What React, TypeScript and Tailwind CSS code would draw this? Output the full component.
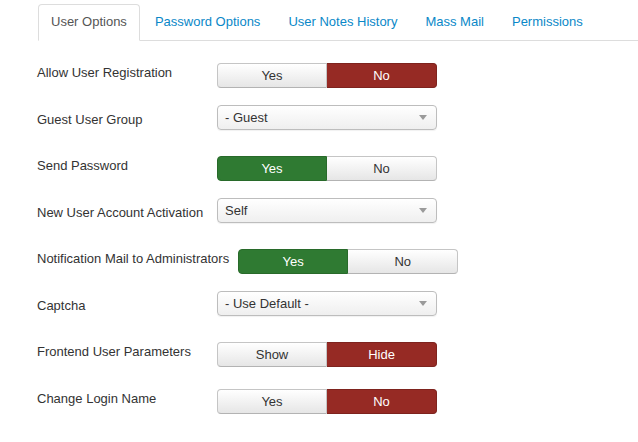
import React from "react";

type Row =
  | { kind: "toggle"; label: string; a: string; b: string; active: "a" | "b"; color: "red" | "green"; h: string }
  | { kind: "select"; label: string; value: string; h: string };

const rows: Row[] = [
  { kind: "toggle", label: "Allow User Registration", a: "Yes", b: "No", active: "b", color: "red", h: "h-[47px]" },
  { kind: "select", label: "Guest User Group", value: "- Guest", h: "h-[46px]" },
  { kind: "toggle", label: "Send Password", a: "Yes", b: "No", active: "a", color: "green", h: "h-[47px]" },
  { kind: "select", label: "New User Account Activation", value: "Self", h: "h-[46px]" },
  { kind: "toggle", label: "Notification Mail to Administrators", a: "Yes", b: "No", active: "a", color: "green", h: "h-[47px]" },
  { kind: "select", label: "Captcha", value: "- Use Default -", h: "h-[46px]" },
  { kind: "toggle", label: "Frontend User Parameters", a: "Show", b: "Hide", active: "b", color: "red", h: "h-[47px]" },
  { kind: "toggle", label: "Change Login Name", a: "Yes", b: "No", active: "b", color: "red", h: "h-[46px]" },
];

const inactiveCls =
  "bg-gradient-to-b from-white to-[#e6e6e6] text-[#333] border border-[#c5c5c5] border-b-[#b3b3b3]";

function Toggle({ a, b, active, color }: { a: string; b: string; active: "a" | "b"; color: "red" | "green" }) {
  const activeCls =
    color === "red"
      ? "bg-[#962a24] text-white border border-[#7e231e]"
      : "bg-[#2f7a32] text-white border border-[#286a2a]";
  return (
    <div className="flex w-[220px] h-[25px] mt-[1px] text-[13px] leading-[18px]">
      <div
        className={`w-[110px] flex items-center justify-center rounded-l-[4px] ${
          active === "a" ? activeCls : inactiveCls
        }`}
      >
        {a}
      </div>
      <div
        className={`w-[110px] flex items-center justify-center rounded-r-[4px] border-l-0 ${
          active === "b" ? activeCls : inactiveCls
        }`}
      >
        {b}
      </div>
    </div>
  );
}

function Select({ value }: { value: string }) {
  return (
    <div className="-mt-[4px] w-[220px] h-[25px] flex items-center justify-between rounded-[4px] border border-[#bdbdbd] bg-gradient-to-b from-white to-[#efefef] pl-[7px] pr-[9px] text-[13px] text-[#333] shadow-[0_1px_1px_rgba(0,0,0,0.06)]">
      <span>{value}</span>
      <svg width="8" height="5" viewBox="0 0 8 5">
        <path d="M0 0 L8 0 L4 5 Z" fill="#9a9a9a" />
      </svg>
    </div>
  );
}

export default function App() {
  const tabs = ["User Options", "Password Options", "User Notes History", "Mass Mail", "Permissions"];
  return (
    <div
      className="w-[638px] h-[442px] bg-white overflow-hidden text-[#333]"
      style={{ fontFamily: '"Liberation Sans", Arial, sans-serif' }}
    >
      <div className="pt-[4px] pl-[38px]">
        <div className="flex border-b border-[#ddd] text-[13px] leading-[18px]">
          {tabs.map((t, i) =>
            i === 0 ? (
              <div
                key={t}
                className="-mb-px mr-[2px] px-[12px] py-[8px] border border-[#ddd] border-b-white rounded-t-[4px] bg-white text-[#555]"
              >
                {t}
              </div>
            ) : (
              <div key={t} className="mr-[2px] px-[12px] py-[8px] border border-transparent text-[#0a88c8]">
                {t}
              </div>
            )
          )}
        </div>
      </div>
      <div className="pl-[37px] pt-[21px]">
        {rows.map((r) => (
          <div key={r.label} className={`flex items-start ${r.h}`}>
            <div className="shrink-0 min-w-[180px] pr-[9px] whitespace-nowrap text-[13px] leading-[18px] mt-[2px] text-[#333]">
              {r.label}
            </div>
            {r.kind === "toggle" ? (
              <Toggle a={r.a} b={r.b} active={r.active} color={r.color} />
            ) : (
              <Select value={r.value} />
            )}
          </div>
        ))}
      </div>
    </div>
  );
}
